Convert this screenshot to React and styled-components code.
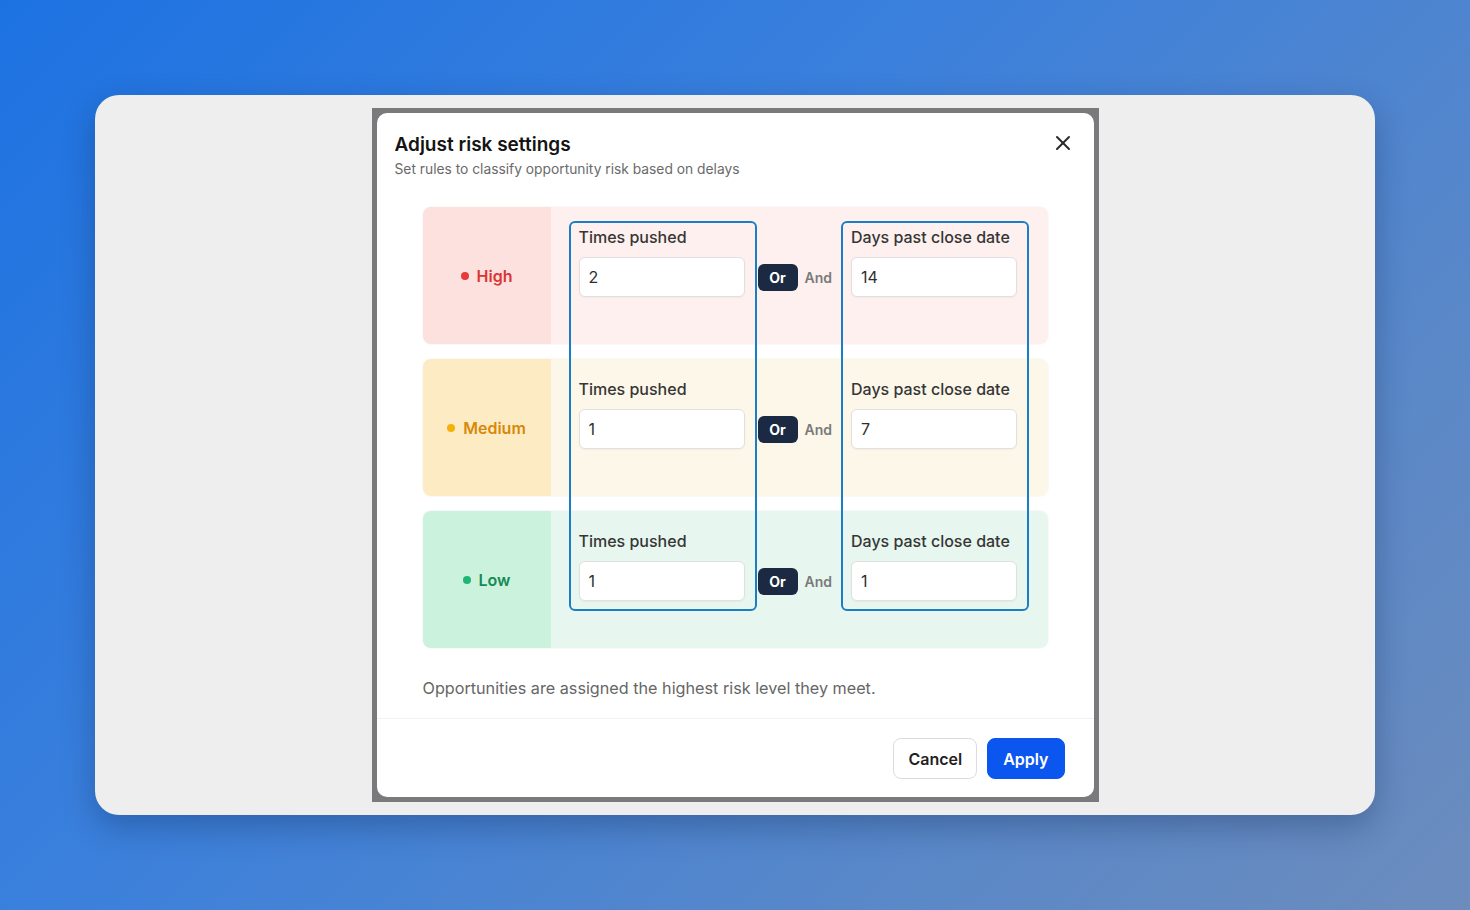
import React from "react";
import styled, { createGlobalStyle } from "styled-components";

const GlobalStyle = createGlobalStyle`
  html, body {
    margin: 0;
    padding: 0;
    height: 100%;
  }
  body {
    font-family: Inter, "Noto Sans", "Liberation Sans", sans-serif;
    -webkit-font-smoothing: antialiased;
  }
  * { box-sizing: border-box; }
`;

const Page = styled.div`
  width: 100%;
  min-height: 100vh;
  display: flex;
  align-items: center;
  justify-content: center;
  background: linear-gradient(135deg, #1d72e2 0%, #3b80dc 40%, #5a88c8 75%, #6c8cbd 100%);
`;

const Card = styled.div`
  width: 1280px;
  height: 720px;
  border-radius: 24px;
  background: #eeeeee;
  box-shadow: 0 12px 32px rgba(10, 30, 70, 0.3);
  display: flex;
  justify-content: center;
  align-items: center;
`;

const Frame = styled.div`
  width: 727px;
  height: 694px;
  background: #7a7a7c;
  padding: 5px;
`;

const Dialog = styled.div`
  height: 100%;
  background: #ffffff;
  border-radius: 10px;
  display: flex;
  flex-direction: column;
`;

const Header = styled.div`
  display: flex;
  justify-content: space-between;
  align-items: flex-start;
  padding: 20px 19px 0 18px;
`;

const Title = styled.h2`
  margin: 0;
  font-size: 19px;
  line-height: 24px;
  font-weight: 600;
  color: #141414;
`;

const Subtitle = styled.p`
  margin: 3px 0 0;
  font-size: 13.8px;
  line-height: 18px;
  color: #6a6a6a;
`;

const CloseButton = styled.button`
  border: none;
  background: transparent;
  padding: 0;
  margin-top: -2px;
  width: 24px;
  height: 24px;
  display: flex;
  align-items: center;
  justify-content: center;
  color: #2a2a2a;
  cursor: pointer;
`;

const Rules = styled.div`
  position: relative;
  margin: 29px 46px 0;
  display: flex;
  flex-direction: column;
  gap: 15px;
`;

const Row = styled.div`
  height: 137px;
  display: flex;
  border-radius: 8px;
  overflow: hidden;
  background: ${(p) => p.$tint};
  box-shadow: 0 0 0 1px rgba(0, 0, 0, 0.025);
`;

const LevelCell = styled.div`
  width: 128px;
  flex: none;
  background: ${(p) => p.$bg};
  display: flex;
  align-items: center;
  justify-content: center;
  gap: 8px;
  font-size: 16px;
  font-weight: 600;
  color: ${(p) => p.$color};
`;

const Dot = styled.span`
  width: 8px;
  height: 8px;
  border-radius: 50%;
  background: ${(p) => p.$color};
`;

const RowBody = styled.div`
  flex: 1;
  display: flex;
  align-items: flex-start;
  padding: 20px 0 0 28px;
`;

const Field = styled.div`
  width: 166px;
  display: flex;
  flex-direction: column;
  gap: 10px;
`;

const FieldLabel = styled.label`
  font-size: 16px;
  line-height: 20px;
  font-weight: 500;
  color: #363636;
  white-space: nowrap;
`;

const Input = styled.input`
  width: 100%;
  height: 40px;
  border: 1px solid #e0e0e0;
  border-radius: 6px;
  background: #ffffff;
  box-shadow: 0 1px 2px rgba(0, 0, 0, 0.04);
  padding: 0 9px;
  font-family: inherit;
  font-size: 16px;
  color: #2e2e2e;
  outline: none;
`;

/* sits level with the inputs: label line (20px) + gap (10px) above */
const Connector = styled.div`
  height: 40px;
  display: flex;
  align-items: center;
  gap: 7px;
  margin: 30px 19px 0 13px;
`;

const OrPill = styled.span`
  width: 40px;
  height: 27px;
  border-radius: 6px;
  background: #1b2a42;
  color: #ffffff;
  font-size: 14px;
  font-weight: 700;
  display: flex;
  align-items: center;
  justify-content: center;
`;

const AndText = styled.span`
  font-size: 14px;
  font-weight: 600;
  color: #7a7a7a;
`;

/* Highlight frames that run down a whole column of fields, across all rows */
const ColumnHighlight = styled.div`
  position: absolute;
  top: 14px;
  left: ${(p) => p.$left}px;
  width: 188px;
  height: 390px;
  border: 2px solid #1b7dc4;
  border-radius: 6px;
  pointer-events: none;
`;

const Footnote = styled.p`
  margin: 28px 46px 0;
  font-size: 16.2px;
  line-height: 24px;
  color: #666666;
`;

const Footer = styled.div`
  margin-top: 18px;
  border-top: 1px solid #f2f2f2;
  padding: 19px 29px 18px;
  display: flex;
  justify-content: flex-end;
  gap: 10px;
`;

const Button = styled.button`
  height: 41px;
  padding: 0 ${(p) => (p.$primary ? 15 : 14)}px;
  border-radius: 8px;
  font-family: inherit;
  font-size: 16px;
  font-weight: 600;
  cursor: pointer;
  border: 1px solid ${(p) => (p.$primary ? "#0a56ee" : "#dcdcdc")};
  background: ${(p) => (p.$primary ? "#0a56ee" : "#ffffff")};
  color: ${(p) => (p.$primary ? "#ffffff" : "#1f1f1f")};
`;

const levels = [
  { name: "High", dot: "#e53b3b", text: "#dc3434", cell: "#fde1df", tint: "#fdf0ee", pushed: "2", days: "14" },
  { name: "Medium", dot: "#f3b10a", text: "#d7890a", cell: "#fdecc3", tint: "#fcf7e9", pushed: "1", days: "7" },
  { name: "Low", dot: "#1fb576", text: "#148a55", cell: "#cbf2dc", tint: "#e7f7ef", pushed: "1", days: "1" },
];

function CloseIcon() {
  return (
    <svg width="24" height="24" viewBox="0 0 24 24" fill="none" stroke="currentColor" strokeWidth="2" strokeLinecap="round">
      <path d="M18 6 6 18" />
      <path d="m6 6 12 12" />
    </svg>
  );
}

export default function App() {
  return (
    <>
      <GlobalStyle />
      <Page>
        <Card>
          <Frame>
            <Dialog>
              <Header>
                <div>
                  <Title>Adjust risk settings</Title>
                  <Subtitle>Set rules to classify opportunity risk based on delays</Subtitle>
                </div>
                <CloseButton aria-label="Close">
                  <CloseIcon />
                </CloseButton>
              </Header>

              <Rules>
                {levels.map((lv) => (
                  <Row key={lv.name} $tint={lv.tint}>
                    <LevelCell $bg={lv.cell} $color={lv.text}>
                      <Dot $color={lv.dot} />
                      {lv.name}
                    </LevelCell>
                    <RowBody>
                      <Field>
                        <FieldLabel>Times pushed</FieldLabel>
                        <Input defaultValue={lv.pushed} />
                      </Field>
                      <Connector>
                        <OrPill>Or</OrPill>
                        <AndText>And</AndText>
                      </Connector>
                      <Field>
                        <FieldLabel>Days past close date</FieldLabel>
                        <Input defaultValue={lv.days} />
                      </Field>
                    </RowBody>
                  </Row>
                ))}
                <ColumnHighlight $left={146} />
                <ColumnHighlight $left={418} />
              </Rules>

              <Footnote>Opportunities are assigned the highest risk level they meet.</Footnote>

              <Footer>
                <Button>Cancel</Button>
                <Button $primary>Apply</Button>
              </Footer>
            </Dialog>
          </Frame>
        </Card>
      </Page>
    </>
  );
}
